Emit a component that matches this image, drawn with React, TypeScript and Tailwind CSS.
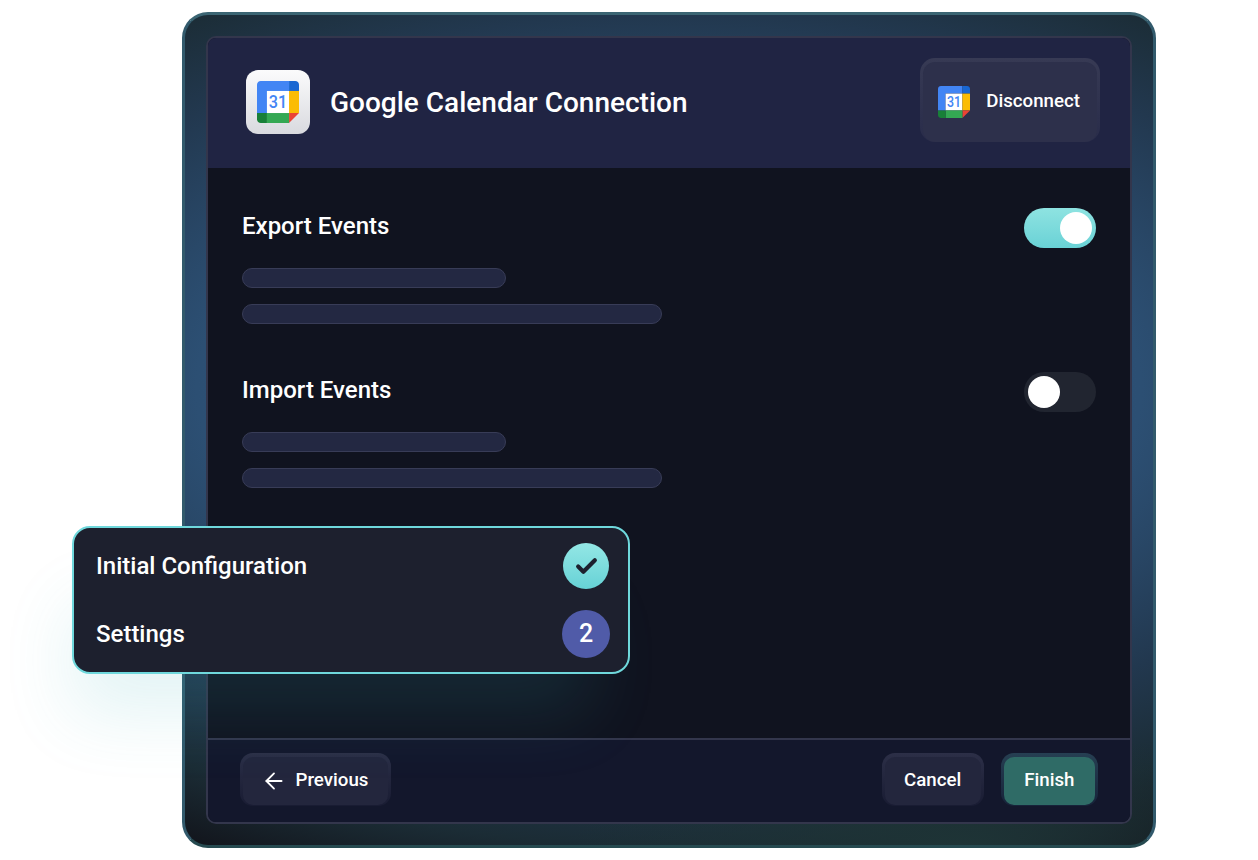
import { ArrowLeft, Check } from "lucide-react";

function CalendarIcon({ size }: { size: number }) {
  return (
    <svg width={size} height={size} viewBox="0 0 200 200" className="shrink-0">
      <path d="M152.6 0H18C8 0 0 8 0 18v134.600h47.400V47.400h105.200z" fill="#4285f4" />
      <rect x="47.400" y="47.400" width="105.200" height="105.200" fill="#fff" />
      <path d="M152.600 0H182c10 0 18 8 18 18v29.400h-47.400z" fill="#1967d2" />
      <rect x="152.600" y="47.400" width="47.400" height="105.200" fill="#fbbc04" />
      <path d="M152.600 152.600H200L152.600 200z" fill="#ea4335" />
      <rect x="47.400" y="152.600" width="105.200" height="47.400" fill="#34a853" />
      <path d="M0 152.600h47.400V200H18C8 200 0 192 0 182z" fill="#188038" />
      <text
        x="100"
        y="129"
        textAnchor="middle"
        fontSize="88"
        fontWeight="500"
        textLength={88}
        lengthAdjust="spacingAndGlyphs"
        fill="#4285f4"
        fontFamily="Roboto, sans-serif"
      >
        31
      </text>
    </svg>
  );
}

function Toggle({ on }: { on: boolean }) {
  if (on) {
    return (
      <div className="flex h-10 w-[72px] items-center justify-end rounded-full bg-gradient-to-b from-[#8ee3e1] to-[#69d2d6] pr-1">
        <div className="h-8 w-8 rounded-full bg-white" />
      </div>
    );
  }
  return (
    <div className="flex h-10 w-[72px] items-center rounded-full bg-[#212530] pl-1">
      <div className="h-8 w-8 rounded-full bg-white" />
    </div>
  );
}

function Section({ title, on }: { title: string; on: boolean }) {
  return (
    <div className="flex flex-col">
      <div className="flex h-10 items-center justify-between">
        <div className="-mt-1 text-2xl font-medium text-white">{title}</div>
        <Toggle on={on} />
      </div>
      <div className="mt-5 h-5 w-[264px] rounded-full border border-[#383c57] bg-[#232842]" />
      <div className="mt-4 h-5 w-[420px] rounded-full border border-[#383c57] bg-[#232842]" />
    </div>
  );
}

function FooterButton({ children, primary }: { children: React.ReactNode; primary?: boolean }) {
  return (
    <div
      className={
        primary
          ? "rounded-[13px] bg-gradient-to-b from-[#263f52] to-[#17233a] px-[3px] pb-px pt-1"
          : "rounded-[13px] bg-gradient-to-b from-[#2c2f47] to-[#191c33] px-[3px] pb-px pt-1"
      }
    >
      <div
        className={
          primary
            ? "flex h-12 items-center justify-center rounded-[10px] bg-[#2f6b66] px-[20.5px] pb-0.5 text-[18.7px] font-medium text-white"
            : "flex h-12 items-center justify-center rounded-[10px] bg-[#23263d] px-[19.5px] pb-0.5 text-[18.7px] font-medium text-white"
        }
      >
        {children}
      </div>
    </div>
  );
}

export default function App() {
  return (
    <div className="relative h-[860px] w-[1258px] overflow-hidden bg-white pl-[182px] pt-3 font-['Roboto',sans-serif]">
      {/* outer frame */}
      <div className="h-[836px] w-[974px] rounded-[26px] border-[3px] border-x-[#325a6c] border-b-[#264a50] border-t-[#3b6573] bg-[radial-gradient(ellipse_40%_14%_at_80%_100%,#1e3436_0%,transparent_100%),radial-gradient(ellipse_80%_50%_at_50%_45%,#32597f_0%,#2c4f73_61%,#22384f_90%,#1b2c35_110%,#12151c_126%)] p-[21px]">
        <div className="flex h-full flex-col overflow-hidden rounded-[10px] border-2 border-[#33364c] bg-[#10131f]">
          <div className="flex h-[130px] shrink-0 items-center justify-between bg-[#202443] pl-[38px] pr-[30px]">
            <div className="flex items-center gap-5">
              <div className="mb-0.5 flex h-16 w-16 items-center justify-center rounded-xl bg-gradient-to-b from-[#fbfbfc] to-[#d9dadf]">
                <CalendarIcon size={42} />
              </div>
              <div className="text-[28px] font-medium text-white">Google Calendar Connection</div>
            </div>
            <div className="-mt-1.5 rounded-[15px] bg-gradient-to-b from-[#373a54] to-[#292c4a] px-[3px] pt-1">
              <div className="flex h-20 items-center gap-4 rounded-xl bg-[#2d304b] pl-[15px] pr-[17px] text-[18.7px] font-medium text-white">
                <CalendarIcon size={32} />
                <span className="-mt-0.5">Disconnect</span>
              </div>
            </div>
          </div>

          <div className="flex flex-1 flex-col gap-12 px-[34px] pt-10">
            <Section title="Export Events" on />
            <Section title="Import Events" on={false} />
          </div>

          <div className="flex h-[84px] shrink-0 items-center justify-between border-t-2 border-[#33364c] bg-[#13172c] px-8 pb-[3px]">
            <FooterButton>
              <ArrowLeft size={26} strokeWidth={1.7} className="-ml-[2px] mr-[9px] mt-0.5" />
              Previous
            </FooterButton>
            <div className="flex items-center gap-[17px]">
              <FooterButton>Cancel</FooterButton>
              <FooterButton primary>Finish</FooterButton>
            </div>
          </div>
        </div>
      </div>

      {/* steps card */}
      <div className="absolute left-[72px] top-[526px] flex h-[148px] w-[558px] flex-col justify-center gap-5 rounded-[18px] border-2 border-[#6fd8dc] bg-[#1d202e] pl-[22px] pr-[18px] shadow-[-20px_60px_70px_-20px_rgba(60,175,185,0.14)]">
        <div className="flex h-12 items-center justify-between">
          <div className="text-2xl font-medium text-white">Initial Configuration</div>
          <div className="mr-px flex h-[46px] w-[46px] items-center justify-center rounded-full bg-gradient-to-b from-[#93e7e5] to-[#66d2d6] text-[#1d202e]">
            <Check size={25} strokeWidth={4} />
          </div>
        </div>
        <div className="flex h-12 items-center justify-between">
          <div className="text-2xl font-medium text-white">Settings</div>
          <div className="flex h-12 w-12 items-center justify-center rounded-full bg-[#505ba8] text-[25px] font-medium text-white">2</div>
        </div>
      </div>
    </div>
  );
}
